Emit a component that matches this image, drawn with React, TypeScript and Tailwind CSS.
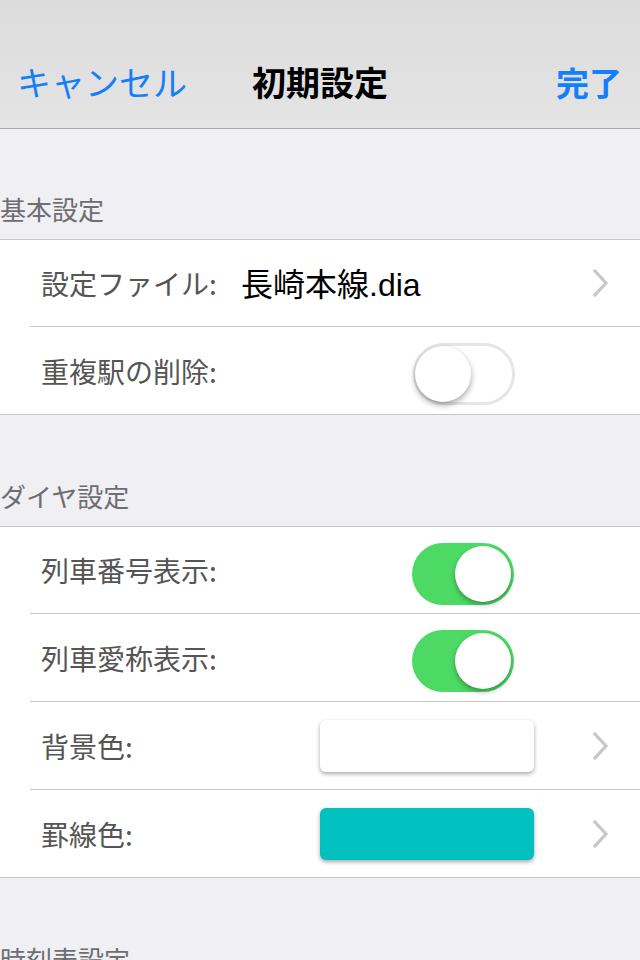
import React from "react";

const JP = { fontFamily: '"Noto Sans CJK JP", "Liberation Sans", sans-serif' };
const LAT = { fontFamily: '"Liberation Sans", "Noto Sans CJK JP", sans-serif' };

function Chevron() {
  return (
    <svg width="18" height="28" viewBox="0 0 18 28" className="shrink-0">
      <path d="M3 2 L14 14 L3 26" fill="none" stroke="#c7c7cc" strokeWidth="3.2" strokeLinecap="square" />
    </svg>
  );
}

function Toggle({ on }: { on: boolean }) {
  return on ? (
    <div className="relative w-[102px] h-[62px] rounded-full bg-[#4cd964] shrink-0">
      <div className="absolute right-[3px] top-[3px] w-[56px] h-[56px] rounded-full bg-white shadow-[0_3px_5px_rgba(0,0,0,0.3)]" />
    </div>
  ) : (
    <div className="relative w-[102px] h-[62px] rounded-full bg-white border-[3px] border-[#e5e5ea] shrink-0">
      <div className="absolute left-[-1px] top-[0px] w-[56px] h-[56px] rounded-full bg-white shadow-[0_3px_6px_rgba(0,0,0,0.35)]" />
    </div>
  );
}

function SectionHeader({ text }: { text: string }) {
  return (
    <div className="h-[111px] flex items-end pb-[15px]">
      <span className="text-[26px] leading-[30px] text-[#6d6d72] whitespace-nowrap" style={JP}>{text}</span>
    </div>
  );
}

function Label({ text }: { text: string }) {
  return (
    <span className="text-[28px] leading-[34px] text-[#555555] whitespace-nowrap" style={JP}>
      {text}
    </span>
  );
}

function Sep() {
  return <div className="ml-[30px] h-px bg-[#c8c7cc]" />;
}

function Swatch({ color }: { color: string }) {
  return (
    <div
      className={`w-[214px] h-[52px] rounded-[6px] shadow-[0_2px_4px_rgba(0,0,0,0.35)] ${color}`}
    />
  );
}

export default function App() {
  return (
    <div className="w-[640px] h-[960px] overflow-hidden bg-[#efeff4]" style={JP}>
      {/* nav bar */}
      <div className="h-[129px] bg-gradient-to-b from-[#dcdcdc] to-[#e4e4e4] border-b border-[#a9a9ad] relative">
        <div className="absolute left-0 right-0 top-[40px] h-[88px] flex items-center justify-between pl-[17px] pr-[18px]">
          <span className="text-[34px] leading-[40px] text-[#147efb] pb-[4px]" style={JP}>キャンセル</span>
          <span className="text-[33px] leading-[40px] text-[#147efb] font-bold pb-[4px]" style={JP}>完了</span>
        </div>
        <div className="absolute left-0 right-0 top-[40px] h-[88px] flex items-center justify-center">
          <span className="text-[34px] leading-[40px] font-bold text-black pb-[4px]" style={JP}>初期設定</span>
        </div>
      </div>

      <div className="h-[110px] flex items-end pb-[15px]">
        <span className="text-[26px] leading-[30px] text-[#6d6d72]" style={JP}>基本設定</span>
      </div>
      <div className="bg-white border-y border-[#c8c7cc]">
        <div className="h-[86px] flex items-center pl-[41px] pr-[30px]">
          <div className="w-[200px]">
            <Label text="設定ファイル:" />
          </div>
          <span className="text-[32px] leading-[36px] text-black flex-1" style={LAT}>
            <span style={JP}>長崎本線</span>.dia
          </span>
          <Chevron />
        </div>
        <Sep />
        <div className="h-[87px] flex items-center pl-[41px]">
          <div className="w-[372px]">
            <Label text="重複駅の削除:" />
          </div>
          <div className="mt-[7px]">
            <Toggle on={false} />
          </div>
        </div>
      </div>

      <SectionHeader text="ダイヤ設定" />
      <div className="bg-white border-y border-[#c8c7cc]">
        <div className="h-[86px] flex items-center pl-[41px]">
          <div className="w-[371px]">
            <Label text="列車番号表示:" />
          </div>
          <div className="mt-[7px]">
            <Toggle on={true} />
          </div>
        </div>
        <Sep />
        <div className="h-[87px] flex items-center pl-[41px]">
          <div className="w-[371px]">
            <Label text="列車愛称表示:" />
          </div>
          <div className="mt-[7px]">
            <Toggle on={true} />
          </div>
        </div>
        <Sep />
        <div className="h-[87px] flex items-center pl-[41px] pr-[30px]">
          <div className="w-[279px]">
            <Label text="背景色:" />
          </div>
          <Swatch color="bg-white" />
          <div className="flex-1" />
          <Chevron />
        </div>
        <Sep />
        <div className="h-[87px] flex items-center pl-[41px] pr-[30px]">
          <div className="w-[279px]">
            <Label text="罫線色:" />
          </div>
          <Swatch color="bg-[#00c0c0]" />
          <div className="flex-1" />
          <Chevron />
        </div>
      </div>

      <SectionHeader text="時刻表設定" />
    </div>
  );
}
